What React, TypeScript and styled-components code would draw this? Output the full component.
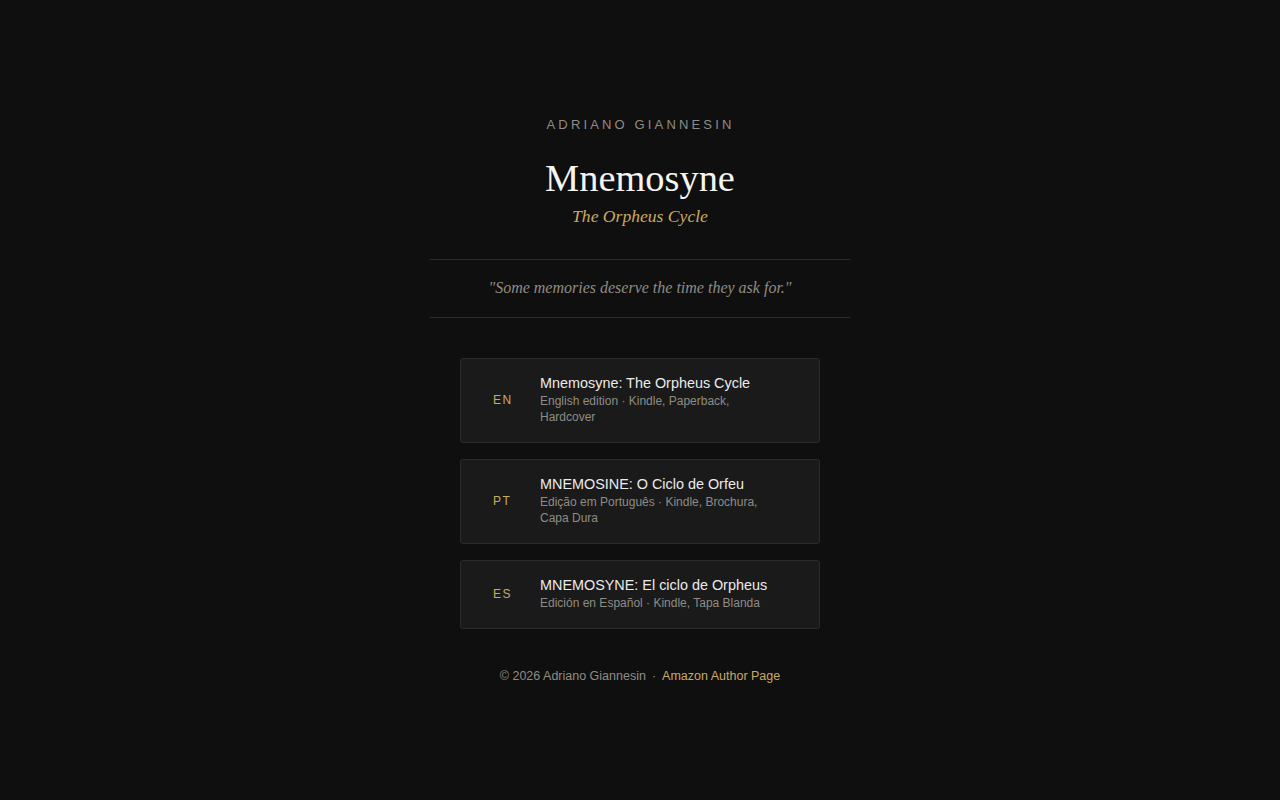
import React from "react";
import styled, { createGlobalStyle } from "styled-components";

const Global = createGlobalStyle`
  html, body { margin: 0; padding: 0; background: #0f0f0f; }
  body { font-family: "Liberation Sans", Arial, sans-serif; color: #e8e8e8; }
  * { box-sizing: border-box; }
`;

const Page = styled.main`
  min-height: 800px;
  display: flex;
  flex-direction: column;
  align-items: center;
  padding-top: 117px;
`;

const Header = styled.header`
  width: 420px;
  display: flex;
  flex-direction: column;
  align-items: center;
`;

const Author = styled.div`
  font-size: 13px;
  letter-spacing: 3.15px;
  color: #8f8c85;
  line-height: 16px;
  padding-left: 1px;
`;

const Title = styled.h1`
  margin: 23px 0 0;
  font-family: "Liberation Serif", "Times New Roman", serif;
  font-weight: 400;
  font-size: 38.4px;
  line-height: 44px;
  color: #f4f4f2;
`;

const Subtitle = styled.div`
  font-family: "Liberation Serif", "Times New Roman", serif;
  font-style: italic;
  font-size: 17.6px;
  line-height: 20px;
  color: #c9aa62;
  margin-top: 6px;
`;

const Quote = styled.blockquote`
  margin: 33px 0 0;
  width: 420px;
  border-top: 1px solid #2b2b2b;
  border-bottom: 1px solid #2b2b2b;
  padding: 18px 0 19px;
  text-align: center;
  font-family: "Liberation Serif", "Times New Roman", serif;
  font-style: italic;
  font-size: 16px;
  line-height: 20px;
  color: #8f8c85;
`;

const Editions = styled.section`
  margin-top: 40px;
  width: 360px;
  display: flex;
  flex-direction: column;
  gap: 16px;
`;

const Card = styled.a`
  display: grid;
  grid-template-columns: 47px 1fr;
  align-items: center;
  padding: 15px 48px 17px 32px;
  background: #1a1a1a;
  border: 1px solid #2b2b2b;
  border-radius: 3px;
  text-decoration: none;
`;

const Lang = styled.span`
  font-size: 12px;
  letter-spacing: 1.5px;
  color: #c9aa62;
`;

const CardText = styled.div`
  display: flex;
  flex-direction: column;
`;

const CardTitle = styled.div`
  font-size: 14.4px;
  line-height: 19px;
  color: #ebebeb;
`;

const CardSub = styled.div`
  font-size: 12px;
  line-height: 16px;
  color: #8f8c85;
`;

const Footer = styled.footer`
  margin-top: 40px;
  font-size: 12.5px;
  color: #8f8c85;
  display: flex;
  gap: 6px;
`;

const FooterLink = styled.a`
  color: #c9aa62;
  text-decoration: none;
`;

const editions = [
  {
    lang: "EN",
    title: "Mnemosyne: The Orpheus Cycle",
    sub: "English edition · Kindle, Paperback, Hardcover",
  },
  {
    lang: "PT",
    title: "MNEMOSINE: O Ciclo de Orfeu",
    sub: "Edição em Português · Kindle, Brochura, Capa Dura",
  },
  {
    lang: "ES",
    title: "MNEMOSYNE: El ciclo de Orpheus",
    sub: "Edición en Español · Kindle, Tapa Blanda",
  },
];

export default function App() {
  return (
    <>
      <Global />
      <Page>
        <Header>
          <Author>ADRIANO GIANNESIN</Author>
          <Title>Mnemosyne</Title>
          <Subtitle>The Orpheus Cycle</Subtitle>
          <Quote>"Some memories deserve the time they ask for."</Quote>
        </Header>
        <Editions>
          {editions.map((e) => (
            <Card key={e.lang} href="#">
              <Lang>{e.lang}</Lang>
              <CardText>
                <CardTitle>{e.title}</CardTitle>
                <CardSub>{e.sub}</CardSub>
              </CardText>
            </Card>
          ))}
        </Editions>
        <Footer>
          <span>© 2026 Adriano Giannesin</span>
          <span>·</span>
          <FooterLink href="#">Amazon Author Page</FooterLink>
        </Footer>
      </Page>
    </>
  );
}
